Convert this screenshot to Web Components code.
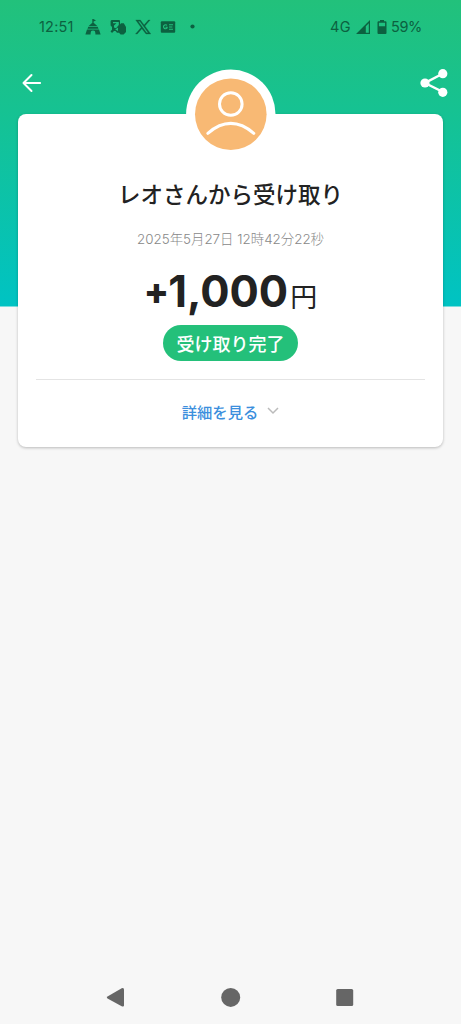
<!DOCTYPE html>
<html lang="ja">
<head>
<meta charset="utf-8">
<title>受け取り完了</title>
<style>
html,body{margin:0;height:100%}
body{font-family:Inter,"Noto Sans CJK JP",sans-serif;background:#f7f7f7;color:#222;overflow:hidden}
</style>
</head>
<body>
<receipt-screen>
  <status-bar slot="status"></status-bar>
  <top-nav slot="nav"></top-nav>
  <receipt-card>
    <user-avatar slot="avatar"></user-avatar>
    <span slot="title">レオさんから受け取り</span>
    <span slot="date">2025年5月27日 12時42分22秒</span>
    <money-amount slot="amount"><span slot="sign">+</span>1,000<span slot="unit">円</span></money-amount>
    <status-pill slot="state">受け取り完了</status-pill>
    <details-link slot="more">詳細を見る</details-link>
  </receipt-card>
  <system-nav slot="system"></system-nav>
</receipt-screen>
<script>
const define = (name, html) => {
  const t = document.createElement('template');
  t.innerHTML = html;
  customElements.define(name, class extends HTMLElement {
    constructor() {
      super();
      this.attachShadow({ mode: 'open' }).append(t.content.cloneNode(true));
    }
  });
};

define('receipt-screen', `
<style>
:host{display:flex;flex-direction:column;height:1024px;box-sizing:border-box;
background:linear-gradient(#22c17b 0,#16c292 110px,#00c3c3 306px) 0 0/100% 306.5px no-repeat #f7f7f7}
main{flex:1;padding:0 18px}
</style>
<slot name="status"></slot><slot name="nav"></slot><main><slot></slot></main><slot name="system"></slot>`);

define('status-bar', `
<style>
:host{display:flex;align-items:center;height:53px;padding:0 40px 0 39px;color:#0c6140;font:400 14.5px/20px Inter,sans-serif}
svg{display:block;fill:currentColor;flex:none}
.time{width:35px;margin-right:11px;letter-spacing:.2px;white-space:nowrap}
.icons{display:flex;align-items:center;gap:9px;flex:1}
.right{display:flex;align-items:center}
</style>
<span class="time">12:51</span>
<div class="icons">
<svg width="16" height="16" viewBox="0 0 16 16"><path d="M7.300 0h1.100l2.600 1.500-2.400 1v1.200L12.300 7H3.700l3.600-3.300zM3.300 7.700h9.400l.8 2H2.500zM2 10.400h12l1.600 5.200h-5.200V14a2.400 2.400 0 0 0-4.800 0v1.600H.4z"/></svg>
<svg width="16" height="16" viewBox="0 0 16 16"><path fill-rule="evenodd" d="M1.500 1H9a1 1 0 0 1 1 1v3.500l1-1.200h2.800L16 8v5l-2.400 2.400h-3L9 13.800H7L5.500 12H4L2 14 .5 12.200 2 10.800V8L.6 6.500V2zM3 3v1.200h3.500L4 6.500v2l2 .8 2.800-3.200V3zm2.200 7.500L8 12V8.600z"/></svg>
<svg width="16" height="16" viewBox="0 0 16 16"><path fill-rule="evenodd" d="M.7 1h4.700l3.700 5 4.300-5h1.700L9.900 7l5.900 8H11L6.900 9.700 2.200 15H.5l5.600-6.500zm2.500 1.300L11.600 13.700h1.600L4.800 2.300z" stroke="currentColor" stroke-width=".3"/></svg>
<svg width="16" height="16" viewBox="0 0 16 16"><rect x=".8" y="2.300" width="14.400" height="11.400" rx="1"/><g fill="none" stroke="#22c17e" stroke-width="1.100"><path d="M7 6.400A2 2 0 1 0 7.100 9V8.200H5.500M9 5.700h4M9 8h3.400M9 10.300h4"/></g></svg>
<svg width="16" height="16" viewBox="0 0 16 16"><circle cx="7.500" cy="7.500" r="2.100"/></svg>
</div>
<div class="right">
<span style="width:21px;margin-right:5px;letter-spacing:.3px">4G</span>
<svg width="15" height="14" viewBox="0 0 15 14"><path fill-rule="evenodd" d="M14 0v14H0zM12.800 3.200L9.800 6.200v6.500h3z"/></svg>
<svg width="10" height="14" viewBox="0 0 10 14" style="margin:0 4px 0 6px"><path fill-rule="evenodd" d="M3 0h4v1.300h1.500a1 1 0 0 1 1 1V13a1 1 0 0 1-1 1h-7a1 1 0 0 1-1-1V2.300a1 1 0 0 1 1-1H3zM1.900 2.800v3.400h6.200V2.800z"/></svg>
<span style="width:30px;letter-spacing:-.4px">59%</span>
</div>`);

define('top-nav', `
<style>
:host{display:flex;justify-content:space-between;align-items:center;height:61px;padding:0 12px 2px 21px;box-sizing:border-box}
svg{display:block;fill:none;stroke:#fff}
</style>
<svg width="21" height="20" viewBox="0 0 21 20"><path d="M10.500 2L2.500 10l8 8M2.500 10h16.600" stroke-width="2" stroke-linecap="round" stroke-linejoin="round"/></svg>
<svg width="30" height="30" viewBox="0 0 30 30"><path d="M24 5.500L6 15l18 9" stroke-width="2.500"/><g fill="#fff" stroke="none"><circle cx="6" cy="15" r="4.600"/><circle cx="23.800" cy="5.700" r="4.600"/><circle cx="23.800" cy="24.300" r="4.600"/></g></svg>`);

define('receipt-card', `
<style>
:host{display:flex;flex-direction:column;align-items:center;height:332.500px;background:#fff;border-radius:8px;box-shadow:0 1px 3px rgba(0,0,0,.25)}
.avatar{height:45px;margin-top:-45px;padding-bottom:61px}
h1{margin:0;font:500 22.500px/36px "Noto Sans CJK JP",sans-serif;white-space:nowrap;color:#222}
.date{font-size:13.400px;line-height:20px;font-weight:300;color:#888;margin-top:18px;white-space:nowrap}
.amount{margin-top:11.500px;height:64px}
hr{width:389px;height:1px;border:0;background:#e4e4e4;margin:18px 0 20px;flex:none}
</style>
<div class="avatar"><slot name="avatar"></slot></div>
<h1><slot name="title"></slot></h1>
<div class="date"><slot name="date"></slot></div>
<div class="amount"><slot name="amount"></slot></div>
<slot name="state"></slot><hr><slot name="more"></slot>`);

define('user-avatar', `
<style>
:host{display:block;width:90px;height:90px}
svg{display:block}
</style>
<svg width="90" height="90" viewBox="0 0 90 90"><circle cx="44.800" cy="45.200" r="44.700" fill="#fff"/><circle cx="44.800" cy="45.200" r="35.800" fill="#f8b974"/><g fill="none" stroke="#fff" stroke-width="3"><circle cx="44.800" cy="35" r="11.300"/><path d="M21.800 64.300Q44.800 44.500 67.800 64.300" stroke-linecap="round"/></g></svg>`);

define('money-amount', `
<style>
:host{display:flex;align-items:baseline;white-space:nowrap;font:700 43.500px/60px Inter,sans-serif;letter-spacing:0;color:#222;font-feature-settings:"calt" 0}
.sign{font-size:37px;font-weight:800;letter-spacing:-1px;position:relative;top:-3px}
.unit{font:400 27px/1 "Noto Sans CJK JP",sans-serif;letter-spacing:0;margin-left:2px}
</style>
<span class="sign"><slot name="sign"></slot></span><span><slot></slot></span><span class="unit"><slot name="unit"></slot></span>`);

define('status-pill', `
<style>
:host{display:flex;align-items:center;justify-content:center;width:135px;height:36px;border-radius:18px;background:#24c07a;color:#fff;font:500 18px/36px "Noto Sans CJK JP",sans-serif;white-space:nowrap;flex:none}
</style><slot></slot>`);

define('details-link', `
<style>
:host{display:flex;align-items:center;gap:9px;height:22px;font:500 15.300px/22px "Noto Sans CJK JP",sans-serif;color:#3c8fdd;white-space:nowrap}
svg{display:block;margin-top:1px}
</style><span><slot></slot></span>
<svg width="12" height="8" viewBox="0 0 12 8"><path d="M1 1l5 5 5-5" fill="none" stroke="#bbb" stroke-width="1.500"/></svg>`);

define('system-nav', `
<style>
:host{display:flex;justify-content:space-between;align-items:center;height:54px;padding:0 106px;fill:#666}
svg{display:block}
</style>
<svg width="20" height="20" viewBox="0 0 20 20"><path d="M1.500 9.600L15.700 1.300Q18 .5 18 2.600v15.800Q18 20 15.700 19.200L1.500 11.400Q0 10.500 1.500 9.600z"/></svg>
<svg width="20" height="20" viewBox="0 0 20 20"><circle cx="9.700" cy="10.400" r="9.500"/></svg>
<svg width="20" height="20" viewBox="0 0 20 20"><rect x="1.200" y="1.900" width="17" height="17" rx="1.500"/></svg>`);
</script>
</body>
</html>
